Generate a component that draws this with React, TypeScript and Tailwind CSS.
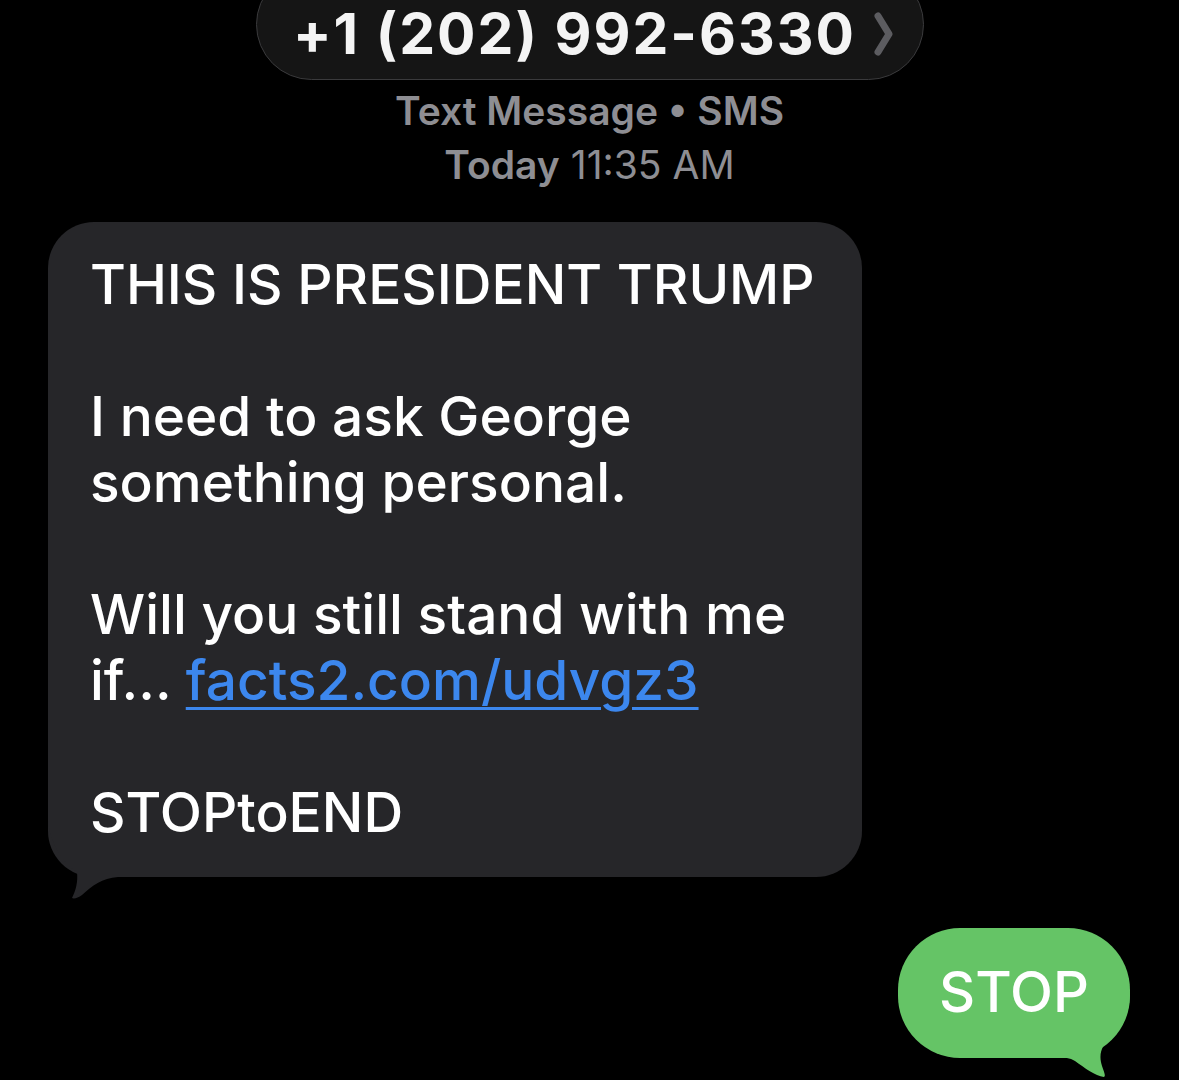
import React from "react";

const font = { fontFamily: "Inter, 'Noto Sans', sans-serif" };

function Header() {
  return (
    <div className="flex flex-col items-center">
      <div className="-mt-[31px] h-[111px] w-[668px] rounded-full border border-[#3a3a3c] bg-[#151515] pt-[31px]">
        <div className="flex h-[80px] items-center justify-center gap-[18px] pb-[16px] pl-[8px]">
          <span className="text-[57px] font-bold leading-none tracking-[2px] text-[#f4f4f4]">
            +1 (202) 992-6330
          </span>
          <svg width="20" height="44" viewBox="0 0 20 44" className="mt-[2px]">
            <polyline
              points="4,4 15,22 4,40"
              fill="none"
              stroke="#5c5c60"
              strokeWidth="7"
              strokeLinecap="round"
              strokeLinejoin="round"
            />
          </svg>
        </div>
      </div>
      <div className="mt-[4px] text-center text-[39px] leading-[54px] text-[#8e8e93]">
        <div className="font-semibold">Text Message • SMS</div>
        <div>
          <span className="font-semibold">Today</span> 11:35 AM
        </div>
      </div>
    </div>
  );
}

function IncomingBubble() {
  return (
    <div className="relative ml-[48px] mt-[30px] w-[814px] rounded-[46px] bg-[#262629] pb-[32px] pl-[42px] pr-[44px] pt-[29px] text-[55px] font-medium leading-[66px] text-white">
      <svg
        width="100"
        height="85"
        viewBox="0 0 100 85"
        className="absolute left-[-8px] top-[598px]"
      >
        <path
          d="M8 0 C10 25 25 45 37 52 C38 62 36 70 32 78 C34 79 38 78 42 75 C52 66 62 58 78 57 L100 57 L100 0 Z"
          fill="#262629"
        />
      </svg>
      <div className="relative">
        <div>THIS IS PRESIDENT TRUMP</div>
        <div className="h-[66px]" />
        <div>I need to ask George</div>
        <div>something personal.</div>
        <div className="h-[66px]" />
        <div>Will you still stand with me</div>
        <div>
          if...{" "}
          <span className="text-[#3c87ee] underline decoration-[3px] underline-offset-[7px]">
            facts2.com/udvgz3
          </span>
        </div>
        <div className="h-[66px]" />
        <div>STOPtoEND</div>
      </div>
    </div>
  );
}

function OutgoingBubble() {
  return (
    <div className="mt-[51px] flex justify-end pr-[49px]">
      <div className="relative flex h-[130px] w-[232px] items-center justify-center rounded-[62px] bg-[#65c466] text-[56px] font-medium text-white">
        <svg
          width="90"
          height="90"
          viewBox="0 0 90 90"
          className="absolute left-[152px] top-[62px]"
        >
          <path
            d="M80 0 C80 25 72 38 62 46 C52 54 48 64 52 76 C54 82 56 86 54 87 C45 86 35 78 25 71 C20 68 14 67 8 67 L0 67 L0 0 Z"
            fill="#65c466"
          />
        </svg>
        <span className="relative pb-[2px]">STOP</span>
      </div>
    </div>
  );
}

export default function App() {
  return (
    <div className="h-[1080px] w-full overflow-hidden bg-black" style={font}>
      <Header />
      <IncomingBubble />
      <OutgoingBubble />
    </div>
  );
}
